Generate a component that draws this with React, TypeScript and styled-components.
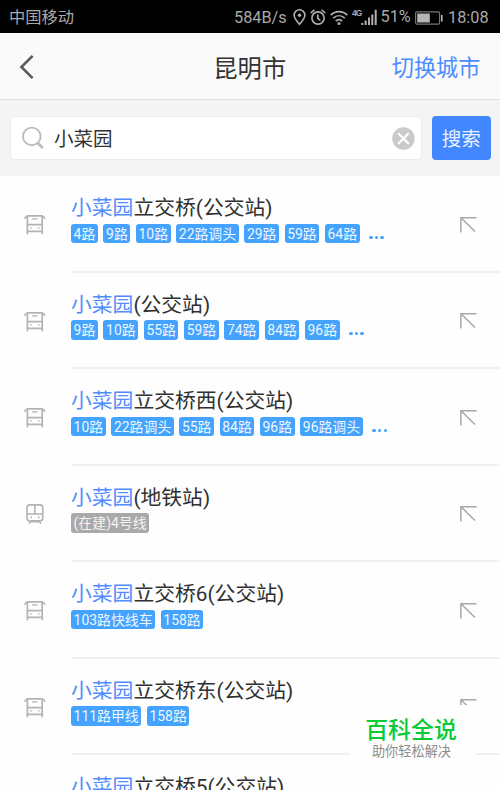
import React from "react";
import styled, { createGlobalStyle } from "styled-components";

const GlobalStyle = createGlobalStyle`
  *, *::before, *::after { box-sizing: border-box; }
  html, body { margin: 0; padding: 0; }
  body {
    overflow: hidden;
    font-family: Roboto, "Noto Sans CJK SC", sans-serif;
    background: #fefefe;
  }
`;

const Screen = styled.div`
  position: relative;
  width: 500px;
  height: 790px;
  overflow: hidden;
  display: flex;
  flex-direction: column;
  background: #fefefe;
`;

const StatusBar = styled.div`
  flex: none;
  height: 33px;
  padding: 2px 11px 0 9px;
  display: flex;
  align-items: center;
  justify-content: space-between;
  background: #000;
  color: #a9a9a9;
  font-size: 16.3px;
  line-height: 31px;
  white-space: nowrap;
`;

const StatusGroup = styled.div`
  display: grid;
  grid-template-columns: 58.5px 17.5px 20px 22px 28.5px 34.5px 33px 41px;
  align-items: center;
`;

const Label = styled.span<{ $shift?: number }>`
  font-size: 16.3px;
  padding-bottom: ${(p) => p.$shift ?? 0}px;
`;

const Icon = styled.svg`
  display: block;
  overflow: visible;
  fill: none;
`;

const Header = styled.header`
  flex: none;
  height: 67px;
  padding: 1px 19.5px 0 19px;
  display: grid;
  grid-template-columns: 1fr auto 1fr;
  align-items: center;
  background: #fafafa;
  border-bottom: 1px solid #dedede;
`;

const Title = styled.h1`
  margin: 0;
  padding-top: 4px;
  font-size: 24.3px;
  font-weight: 400;
  line-height: 34px;
  color: #333;
`;

const BackButton = styled.button`
  padding: 0;
  border: 0;
  background: none;
  justify-self: start;
`;

const CityButton = styled.button`
  padding: 2px 0 0;
  border: 0;
  background: none;
  justify-self: end;
  font-family: inherit;
  font-size: 22.2px;
  line-height: 32px;
  color: #4c8dff;
`;

const SearchBar = styled.div`
  flex: none;
  height: 76px;
  padding: 0 9.5px 0 9.5px;
  display: flex;
  align-items: center;
  gap: 10px;
  background: #f4f4f4;
`;

const SearchField = styled.div`
  flex: 1;
  height: 44px;
  padding: 0 6px 0 11px;
  display: flex;
  align-items: center;
  background: #fff;
  border: 1px solid #ececec;
  border-radius: 5px;
`;

const Query = styled.span`
  flex: 1;
  padding: 3px 0 0 10.5px;
  font-size: 19.5px;
  line-height: 30px;
  color: #333;
`;

const SearchButton = styled.button`
  width: 58.5px;
  height: 44.5px;
  padding: 4px 0 0;
  border: 0;
  border-radius: 4px;
  background: #4287ff;
  color: #e9f1ff;
  font-family: inherit;
  font-size: 19.5px;
  line-height: 30px;
`;

const Results = styled.ul`
  margin: 0;
  padding: 0;
  list-style: none;
`;

const Row = styled.li`
  height: 96.5px;
  display: grid;
  grid-template-columns: 71px 1fr 71px;
`;

const RowIcon = styled.div`
  padding: 38px 0 0 24px;
`;

const RowBody = styled.div`
  grid-column: 2 / 4;
  grid-row: 1;
  padding-top: 17px;
  border-bottom: 2px solid #f1f1f1;
`;

const Arrow = styled.div`
  grid-column: 3;
  grid-row: 1;
  padding: 39.5px 0 0 31px;
`;

const StationName = styled.div`
  height: 30px;
  font-size: 20.8px;
  line-height: 30px;
  color: #303030;
  white-space: nowrap;
`;

const Match = styled.span`
  color: #528cff;
`;

const Tags = styled.div`
  display: flex;
  gap: 5.6px;
  margin-top: 0.5px;
`;

const Tag = styled.span<{ $muted?: boolean }>`
  height: 19.5px;
  padding: 1px 2.6px 0;
  border-radius: 3px;
  background: ${(p) => (p.$muted ? "#a9a9a9" : "#43a3ff")};
  color: ${(p) => (p.$muted ? "#f3f3f3" : "#eef7ff")};
  font-size: 13.9px;
  line-height: 19.5px;
  white-space: nowrap;
`;

const More = styled.span`
  display: flex;
  gap: 2.2px;
  padding: 12px 0 0 4px;
`;

const Dot = styled.i`
  width: 3.4px;
  height: 3.4px;
  border-radius: 50%;
  background: #43a3ff;
`;

const Badge = styled.aside`
  position: absolute;
  left: 350px;
  top: 705px;
  width: 125px;
  height: 85px;
  padding: 10px 0 0;
  background: #fefefe;
  text-align: center;
  white-space: nowrap;
`;

const BadgeTitle = styled.div`
  padding-right: 3px;
  font-size: 22.9px;
  font-weight: 500;
  line-height: 32px;
  color: #08cb35;
`;

const BadgeText = styled.div`
  padding-right: 2px;
  font-size: 13.2px;
  line-height: 20px;
  margin-top: -5px;
  color: #8c8c8c;
`;

const PinIcon = () => (
  <Icon width="13" height="17" viewBox="0 0 13 17" stroke="#b0b0b0" strokeWidth="1.6">
    <path d="M6.5 15.3C3 11.3 1.1 8.9 1.1 6.2a5.4 5.4 0 0 1 10.8 0c0 2.7-1.9 5.1-5.4 9.1Z" />
    <circle cx="6.5" cy="6.3" r="1.7" fill="#b0b0b0" stroke="none" />
  </Icon>
);

const AlarmIcon = () => (
  <Icon width="16" height="17" viewBox="0 0 16 17" stroke="#b0b0b0" strokeWidth="1.6">
    <circle cx="8" cy="9" r="6.1" />
    <path d="M7.8 5.5v3.8l2.6 2.2M.7 4 4.4.9M15.3 4 11.6.9" />
  </Icon>
);

const WifiIcon = () => (
  <Icon width="18" height="16" viewBox="0 0 18 16" stroke="#b0b0b0" strokeWidth="1.7">
    <path d="M.7 5.2c4.8-4.7 11.8-4.7 16.6 0M3.2 8.2c3.5-3.3 8.1-3.3 11.6 0M5.8 11c2-1.7 4.4-1.7 6.4 0" />
    <circle cx="9" cy="13.6" r="1.5" fill="#b0b0b0" stroke="none" />
  </Icon>
);

const Signal = styled.span`
  display: flex;
  align-items: flex-start;
  height: 18px;
`;

const Network = styled.span`
  width: 9px;
  margin-top: 0;
  font-family: "Liberation Sans", sans-serif;
  font-size: 8.5px;
  font-weight: 700;
  line-height: 8px;
  letter-spacing: -0.9px;
`;

const SignalIcon = () => (
  <Icon width="17" height="16" viewBox="0 0 17 16">
    <path
      fill="#b0b0b0"
      d="M.2 14h2v2h-2zM3.6 11.6h2V16h-2zM7 8.4h2V16H7zM10.3 5.4h2V16h-2zM13.7.8h2V16h-2z"
    />
  </Icon>
);

const BatteryIcon = () => (
  <Icon width="28" height="14" viewBox="0 0 28 14">
    <rect x=".6" y=".8" width="24" height="12.4" rx="1.5" stroke="#777" strokeWidth="1.2" />
    <path fill="#b5b5b5" d="M2.2 2.4h12.6v9.2H2.2zM26 4h1.6v6.4H26z" />
  </Icon>
);

const BackIcon = () => (
  <Icon width="16" height="26" viewBox="0 0 16 26" stroke="#5c5c5c" strokeWidth="2.6">
    <path d="M13.6 1.8 2.4 13l11.2 11.2" />
  </Icon>
);

const SearchIcon = () => (
  <Icon width="22" height="24" viewBox="0 0 22 24" stroke="#bcbcbc">
    <circle cx="9.8" cy="10.4" r="8.8" strokeWidth="1.9" />
    <path d="m16.2 17.4 3.8 3.8" strokeWidth="2.8" strokeLinecap="round" />
  </Icon>
);

const ClearIcon = () => (
  <Icon width="23" height="23" viewBox="0 0 23 23">
    <circle cx="11.5" cy="11.5" r="11.2" fill="#cacaca" />
    <path d="m6.8 6.8 9.4 9.4m0-9.4-9.4 9.4" stroke="#fff" strokeWidth="2.2" strokeLinecap="round" />
  </Icon>
);

const BusIcon = () => (
  <Icon width="22" height="21" viewBox="0 0 22 21" stroke="#b3b3b3" strokeWidth="1.7">
    <path d="M3.4 17.4V1.9h14.8v15.5M2.4 17.4h16.8M3.4 10.6h14.8M3.4 17v3.2M18.2 17v3.2" />
    <path d="M8 4.9h5.6M3.4 2.7H2.2Q.9 2.8.8 5M18.2 2.7h1.2q1.3.1 1.4 2.3M6.1 13.9h1.6M14 13.9h1.6" strokeWidth="1.4" />
  </Icon>
);

const MetroIcon = () => (
  <Icon width="22" height="21" viewBox="0 0 22 21" stroke="#b3b3b3" strokeWidth="1.6">
    <rect x="3" y=".9" width="15.8" height="15.8" rx="2.8" />
    <path d="M3 10h15.8M10.9.9V10M6.3 13.4h1.6M13.9 13.4h1.6M6.8 16.9l-1.9 2.5M15 16.9l1.9 2.5M7 17.6h7.8" />
  </Icon>
);

const FillIcon = () => (
  <Icon width="18" height="18" viewBox="0 0 18 18" stroke="#a8a8a8" strokeWidth="1.5">
    <path d="M16.6 1.7H.9v14.8M1.2 2l13.8 13.5" />
  </Icon>
);

type Station = {
  suffix: string;
  lines: string[];
  metro?: boolean;
  more?: boolean;
};

const stations: Station[] = [
  {
    suffix: "立交桥(公交站)",
    lines: ["4路", "9路", "10路", "22路调头", "29路", "59路", "64路"],
    more: true,
  },
  {
    suffix: "(公交站)",
    lines: ["9路", "10路", "55路", "59路", "74路", "84路", "96路"],
    more: true,
  },
  {
    suffix: "立交桥西(公交站)",
    lines: ["10路", "22路调头", "55路", "84路", "96路", "96路调头"],
    more: true,
  },
  { suffix: "(地铁站)", lines: ["(在建)4号线"], metro: true },
  { suffix: "立交桥6(公交站)", lines: ["103路快线车", "158路"] },
  { suffix: "立交桥东(公交站)", lines: ["111路甲线", "158路"] },
  { suffix: "立交桥5(公交站)", lines: [] },
];

const StationRow = ({ suffix, lines, metro, more }: Station) => (
  <Row>
    <RowIcon>{metro ? <MetroIcon /> : <BusIcon />}</RowIcon>
    <RowBody>
      <StationName>
        <Match>小菜园</Match>
        {suffix}
      </StationName>
      <Tags>
        {lines.map((line) => (
          <Tag key={line} $muted={metro}>
            {line}
          </Tag>
        ))}
        {more && (
          <More>
            <Dot />
            <Dot />
            <Dot />
          </More>
        )}
      </Tags>
    </RowBody>
    <Arrow>
      <FillIcon />
    </Arrow>
  </Row>
);

export default function App() {
  return (
    <>
      <GlobalStyle />
      <Screen>
        <StatusBar>
          <Label>中国移动</Label>
          <StatusGroup>
            <Label>584B/s</Label>
            <PinIcon />
            <AlarmIcon />
            <WifiIcon />
            <Signal>
              <Network>4G</Network>
              <SignalIcon />
            </Signal>
            <Label $shift={2}>51%</Label>
            <BatteryIcon />
            <Label>18:08</Label>
          </StatusGroup>
        </StatusBar>
        <Header>
          <BackButton aria-label="返回">
            <BackIcon />
          </BackButton>
          <Title>昆明市</Title>
          <CityButton>切换城市</CityButton>
        </Header>
        <SearchBar>
          <SearchField>
            <SearchIcon />
            <Query>小菜园</Query>
            <ClearIcon />
          </SearchField>
          <SearchButton>搜索</SearchButton>
        </SearchBar>
        <Results>
          {stations.map((station) => (
            <StationRow key={station.suffix} {...station} />
          ))}
        </Results>
        <Badge>
          <BadgeTitle>百科全说</BadgeTitle>
          <BadgeText>助你轻松解决</BadgeText>
        </Badge>
      </Screen>
    </>
  );
}
